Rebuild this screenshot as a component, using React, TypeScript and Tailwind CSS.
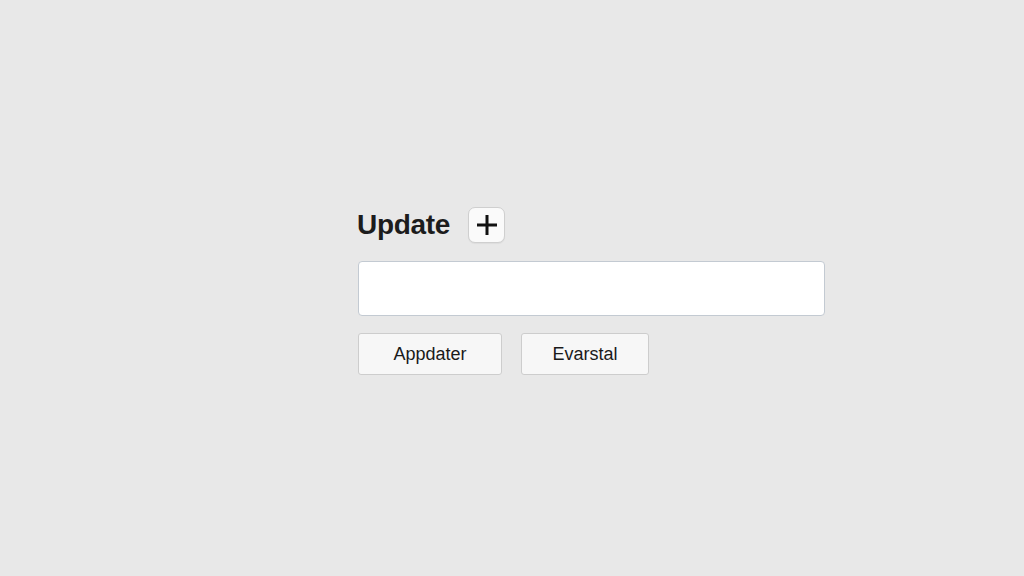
import React from "react";

export default function App() {
  return (
    <div
      className="w-[1024px] h-[576px] bg-[#e8e8e8] pl-[358px] pt-[207px]"
      style={{ fontFamily: '"Liberation Sans", Arial, sans-serif' }}
    >
      <div className="flex flex-col w-[468px]">
        <div className="flex items-center gap-[18px] -ml-[1px]">
          <h1 className="text-[28px] font-bold tracking-[-0.3px] text-[#1c1c1c] leading-none">Update</h1>
          <button className="w-[37px] h-[36px] rounded-[7px] bg-[#fafafa] border border-[#cfcfcf] flex items-center justify-center shadow-[0_1px_1px_rgba(0,0,0,0.05)]">
            <svg width="22" height="22" viewBox="0 0 22 22">
              <path d="M11 1v20M1 11h20" stroke="#111" strokeWidth="3" strokeLinecap="butt" />
            </svg>
          </button>
        </div>
        <input
          className="mt-[18px] w-[467px] h-[55px] rounded-[4px] bg-white border border-[#c3cad2] outline-none"
          type="text"
        />
        <div className="mt-[17px] flex gap-[19px]">
          <button className="w-[144px] h-[42px] rounded-[3px] bg-[#f7f7f7] border border-[#cdcdcd] text-[18px] text-[#1a1a1a]">
            Appdater
          </button>
          <button className="w-[128px] h-[42px] rounded-[3px] bg-[#f7f7f7] border border-[#cdcdcd] text-[18px] text-[#1a1a1a]">
            Evarstal
          </button>
        </div>
      </div>
    </div>
  );
}
